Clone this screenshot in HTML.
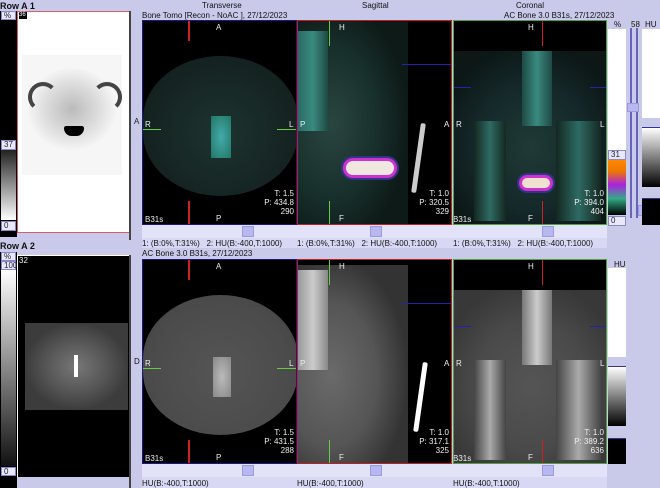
<!DOCTYPE html>
<html><head><meta charset="utf-8"><style>
*{margin:0;padding:0;box-sizing:border-box}
body{width:660px;height:488px;overflow:hidden;background:#c9c9ea;font-family:"Liberation Sans",sans-serif;font-size:8px;color:#222;position:relative}
.a{position:absolute}
.pan{position:absolute;background:#000;overflow:hidden}
.w{color:#eee;font-size:8px;position:absolute}
.lbl{position:absolute;font-size:8px;color:#111;white-space:nowrap}
.bar{position:absolute;background:#e2e2f8}
.th{position:absolute;background:#b8b8f0;border:1px solid #9a9ae0;width:12px;height:11px}
.box{position:absolute;background:#e8e8fa;border:1px solid #8888c8;font-size:8px;color:#223;padding-left:2px;line-height:8px}
</style></head><body>

<div class="lbl" style="left:0;top:1px;font-weight:bold;font-size:9px">Row A 1</div>
<div class="a" style="left:0;top:11px;width:17px;height:226px;background:#000"></div>
<div class="box" style="left:1px;top:11px;width:15px;height:9px">%</div>
<div class="box" style="left:1px;top:140px;width:15px;height:10px">37</div>
<div class="a" style="left:1px;top:150px;width:15px;height:70px;background:linear-gradient(#222,#fff)"></div>
<div class="box" style="left:1px;top:221px;width:15px;height:10px">0</div>
<div class="a" style="left:17px;top:11px;width:113px;height:222px;background:#fff;border:1px solid #d06070"></div>
<div class="a" style="left:19px;top:12px;width:8px;height:7px;background:#000;color:#fff;font-size:6px">36</div>
<div class="a" style="left:22px;top:55px;width:100px;height:120px;background:radial-gradient(ellipse 45% 35% at 50% 45%,#bbb,#ddd 60%,#f6f6f6 100%)"></div>
<div class="a" style="left:28px;top:82px;width:30px;height:30px;border-radius:50%;border:4px solid #444;border-right-color:transparent;border-bottom-color:transparent"></div>
<div class="a" style="left:92px;top:82px;width:30px;height:30px;border-radius:50%;border:4px solid #444;border-left-color:transparent;border-bottom-color:transparent"></div>
<div class="a" style="left:64px;top:126px;width:20px;height:10px;background:#000;border-radius:3px 3px 10px 10px"></div>
<div class="a" style="left:129px;top:11px;width:2px;height:229px;background:#444"></div>

<div class="lbl" style="left:0;top:241px;font-weight:bold;font-size:9px">Row A 2</div>
<div class="a" style="left:0;top:252px;width:17px;height:236px;background:#000"></div>
<div class="box" style="left:1px;top:252px;width:15px;height:9px">%</div>
<div class="box" style="left:1px;top:261px;width:15px;height:9px">100</div>
<div class="a" style="left:1px;top:270px;width:15px;height:196px;background:linear-gradient(#fff,#111)"></div>
<div class="box" style="left:1px;top:467px;width:15px;height:9px">0</div>
<div class="a" style="left:17px;top:255px;width:113px;height:222px;background:#000;border:1px solid #fff;border-bottom:none"></div>
<div class="w" style="left:19px;top:256px">32</div>
<div class="a" style="left:25px;top:323px;width:103px;height:87px;background:radial-gradient(ellipse 50% 50% at 50% 50%,#777,#555 60%,#3c3c3c)"></div>
<div class="a" style="left:74px;top:355px;width:4px;height:22px;background:#fff"></div>
<div class="a" style="left:129px;top:255px;width:2px;height:233px;background:#444"></div>

<div class="lbl" style="left:202px;top:1px">Transverse</div>
<div class="lbl" style="left:362px;top:1px">Sagittal</div>
<div class="lbl" style="left:516px;top:1px">Coronal</div>
<div class="lbl" style="left:142px;top:11px">Bone Tomo [Recon - NoAC ], 27/12/2023</div>
<div class="lbl" style="left:504px;top:11px">AC Bone 3.0 B31s, 27/12/2023</div>

<div class="pan" style="left:142px;top:20px;width:155px;height:205px;border:1px solid #1a1a80">
 <div class="a" style="left:0;top:35px;width:155px;height:140px;border-radius:50%/45%;background:radial-gradient(ellipse at 50% 55%,#1d3330,#142220 70%,#0a1211)"></div>
 <div class="a" style="left:68px;top:95px;width:20px;height:42px;background:radial-gradient(#4aa,#276)"></div>
 <div class="a" style="left:45px;top:0;width:2px;height:20px;background:#c22"></div>
 <div class="a" style="left:45px;top:180px;width:2px;height:25px;background:#c22"></div>
 <div class="a" style="left:0;top:108px;width:18px;height:1px;background:#6c4"></div>
 <div class="a" style="left:134px;top:108px;width:20px;height:1px;background:#6c4"></div>
 <div class="w" style="left:73px;top:2px">A</div><div class="w" style="left:73px;top:193px">P</div>
 <div class="w" style="left:2px;top:99px">R</div><div class="w" style="left:146px;top:99px">L</div>
 <div class="w" style="right:2px;top:168px;text-align:right;line-height:9px">T: 1.5<br>P: 434.8<br>290</div>
 <div class="w" style="left:2px;top:194px">B31s</div>
</div>
<div class="lbl" style="left:134px;top:117px;color:#222">A</div>
<div class="pan" style="left:297px;top:20px;width:155px;height:205px;border:1px solid #c02020">
 <div class="a" style="left:0;top:0;width:110px;height:205px;background:radial-gradient(ellipse 70% 60% at 30% 50%,#2a4540,#18302c 60%,#0d1a18)"></div>
 <div class="a" style="left:0;top:10px;width:30px;height:100px;background:linear-gradient(90deg,#2a6a64,#3a8a80,#1d4a44)"></div>
 <div class="a" style="left:48px;top:140px;width:48px;height:14px;border-radius:8px;background:#f0e8e0;box-shadow:0 0 0 3px #c3c,0 0 0 5px #338"></div>
 <div class="a" style="left:118px;top:102px;width:5px;height:70px;background:#ccc;border-radius:2px;transform:rotate(8deg)"></div>
 <div class="a" style="left:31px;top:0;width:1px;height:25px;background:#6c4"></div>
 <div class="a" style="left:31px;top:180px;width:1px;height:25px;background:#6c4"></div>
 <div class="a" style="left:104px;top:43px;width:50px;height:1px;background:#22a"></div>
 <div class="w" style="left:41px;top:2px">H</div><div class="w" style="left:41px;top:193px">F</div>
 <div class="w" style="left:2px;top:99px">P</div><div class="w" style="left:146px;top:99px">A</div>
 <div class="w" style="right:2px;top:168px;text-align:right;line-height:9px">T: 1.0<br>P: 320.5<br>329</div>
</div>
<div class="pan" style="left:453px;top:20px;width:154px;height:205px;border:1px solid #50a040">
 <div class="a" style="left:0;top:30px;width:154px;height:175px;background:radial-gradient(ellipse 60% 60% at 50% 55%,#1f3a36,#15282a 60%,#0c1716)"></div>
 <div class="a" style="left:68px;top:30px;width:30px;height:75px;background:linear-gradient(90deg,#1d4a44,#3a8a80,#1d4a44)"></div>
 <div class="a" style="left:20px;top:100px;width:32px;height:100px;background:linear-gradient(90deg,#132820,#2e6a64,#132820)"></div>
 <div class="a" style="left:102px;top:100px;width:45px;height:100px;background:linear-gradient(90deg,#132820,#2e6a64,#132820)"></div>
 <div class="a" style="left:68px;top:157px;width:28px;height:10px;border-radius:6px;background:#f0e0d0;box-shadow:0 0 0 3px #c3c,0 0 0 5px #338"></div>
 <div class="a" style="left:88px;top:0;width:1px;height:25px;background:#c22"></div>
 <div class="a" style="left:88px;top:180px;width:1px;height:25px;background:#c22"></div>
 <div class="a" style="left:0;top:66px;width:17px;height:1px;background:#22a"></div>
 <div class="a" style="left:136px;top:66px;width:18px;height:1px;background:#22a"></div>
 <div class="w" style="left:74px;top:2px">H</div><div class="w" style="left:74px;top:193px">F</div>
 <div class="w" style="left:2px;top:99px">R</div><div class="w" style="left:146px;top:99px">L</div>
 <div class="w" style="right:2px;top:168px;text-align:right;line-height:9px">T: 1.0<br>P: 394.0<br>404</div>
 <div class="w" style="left:-1px;top:194px">B31s</div>
</div>
<div class="bar" style="left:142px;top:225px;width:465px;height:13px"></div>
<div class="th" style="left:242px;top:226px"></div>
<div class="th" style="left:370px;top:226px"></div>
<div class="th" style="left:542px;top:226px"></div>
<div class="bar" style="left:142px;top:238px;width:465px;height:10px;background:#d8d8f4"></div>
<div class="lbl" style="left:142px;top:239px">1: (B:0%,T:31%)&nbsp;&nbsp;&nbsp;2: HU(B:-400,T:1000)</div>
<div class="lbl" style="left:297px;top:239px">1: (B:0%,T:31%)&nbsp;&nbsp;&nbsp;2: HU(B:-400,T:1000)</div>
<div class="lbl" style="left:453px;top:239px">1: (B:0%,T:31%)&nbsp;&nbsp;&nbsp;2: HU(B:-400,T:1000)</div>

<div class="lbl" style="left:614px;top:20px">%</div>
<div class="lbl" style="left:631px;top:20px">58</div>
<div class="lbl" style="left:645px;top:20px">HU</div>
<div class="a" style="left:608px;top:29px;width:18px;height:121px;background:#fff"></div>
<div class="box" style="left:608px;top:150px;width:18px;height:10px">31</div>
<div class="a" style="left:608px;top:160px;width:18px;height:55px;background:linear-gradient(#f80,#e70 20%,#a2d 45%,#3a8 70%,#000)"></div>
<div class="box" style="left:608px;top:216px;width:18px;height:10px">0</div>
<div class="a" style="left:630px;top:28px;width:8px;height:190px;border-left:2px solid #6666b8;border-right:2px solid #6666b8"></div>
<div class="th" style="left:627px;top:103px;width:12px;height:9px"></div>
<div class="th" style="left:638px;top:205px;width:10px;height:11px"></div>
<div class="a" style="left:642px;top:29px;width:18px;height:89px;background:#fff"></div>
<div class="a" style="left:642px;top:127px;width:18px;height:60px;background:linear-gradient(#fff,#000);border-top:1px solid #338"></div>
<div class="a" style="left:642px;top:198px;width:18px;height:27px;background:#000;border-top:1px solid #338"></div>

<div class="lbl" style="left:142px;top:249px">AC Bone 3.0 B31s, 27/12/2023</div>
<div class="pan" style="left:142px;top:259px;width:155px;height:205px;border:1px solid #1a1a80">
 <div class="a" style="left:0;top:35px;width:155px;height:140px;border-radius:50%/45%;background:radial-gradient(ellipse at 50% 55%,#555,#4a4a4a 70%,#2a2a2a)"></div>
 <div class="a" style="left:70px;top:97px;width:18px;height:40px;background:radial-gradient(#bbb,#888)"></div>
 <div class="a" style="left:45px;top:0;width:2px;height:20px;background:#c22"></div>
 <div class="a" style="left:45px;top:180px;width:2px;height:25px;background:#c22"></div>
 <div class="a" style="left:0;top:108px;width:18px;height:1px;background:#6c4"></div>
 <div class="a" style="left:134px;top:108px;width:20px;height:1px;background:#6c4"></div>
 <div class="w" style="left:73px;top:2px">A</div><div class="w" style="left:73px;top:193px">P</div>
 <div class="w" style="left:2px;top:99px">R</div><div class="w" style="left:146px;top:99px">L</div>
 <div class="w" style="right:2px;top:168px;text-align:right;line-height:9px">T: 1.5<br>P: 431.5<br>288</div>
 <div class="w" style="left:2px;top:194px">B31s</div>
</div>
<div class="lbl" style="left:134px;top:357px">D</div>
<div class="pan" style="left:297px;top:259px;width:155px;height:205px;border:1px solid #c02020">
 <div class="a" style="left:0;top:5px;width:110px;height:200px;background:radial-gradient(ellipse 70% 60% at 30% 55%,#6a6a6a,#555 60%,#333)"></div>
 <div class="a" style="left:0;top:10px;width:30px;height:100px;background:linear-gradient(90deg,#999,#ccc,#888)"></div>
 <div class="a" style="left:120px;top:102px;width:5px;height:70px;background:#fff;border-radius:2px;transform:rotate(8deg)"></div>
 <div class="a" style="left:31px;top:0;width:1px;height:25px;background:#6c4"></div>
 <div class="a" style="left:31px;top:180px;width:1px;height:25px;background:#6c4"></div>
 <div class="a" style="left:104px;top:43px;width:50px;height:1px;background:#22a"></div>
 <div class="w" style="left:41px;top:2px">H</div><div class="w" style="left:41px;top:193px">F</div>
 <div class="w" style="left:2px;top:99px">P</div><div class="w" style="left:146px;top:99px">A</div>
 <div class="w" style="right:2px;top:168px;text-align:right;line-height:9px">T: 1.0<br>P: 317.1<br>325</div>
</div>
<div class="pan" style="left:453px;top:259px;width:154px;height:205px;border:1px solid #50a040">
 <div class="a" style="left:0;top:30px;width:154px;height:175px;background:radial-gradient(ellipse 60% 60% at 50% 55%,#555,#4a4a4a 60%,#383838)"></div>
 <div class="a" style="left:68px;top:30px;width:30px;height:75px;background:linear-gradient(90deg,#777,#ccc,#777)"></div>
 <div class="a" style="left:20px;top:100px;width:32px;height:100px;background:linear-gradient(90deg,#444,#aaa,#444)"></div>
 <div class="a" style="left:102px;top:100px;width:45px;height:100px;background:linear-gradient(90deg,#444,#aaa,#444)"></div>
 <div class="a" style="left:88px;top:0;width:1px;height:25px;background:#c22"></div>
 <div class="a" style="left:88px;top:180px;width:1px;height:25px;background:#c22"></div>
 <div class="a" style="left:0;top:66px;width:17px;height:1px;background:#22a"></div>
 <div class="a" style="left:136px;top:66px;width:18px;height:1px;background:#22a"></div>
 <div class="w" style="left:74px;top:2px">H</div><div class="w" style="left:74px;top:193px">F</div>
 <div class="w" style="left:2px;top:99px">R</div><div class="w" style="left:146px;top:99px">L</div>
 <div class="w" style="right:2px;top:168px;text-align:right;line-height:9px">T: 1.0<br>P: 389.2<br>636</div>
 <div class="w" style="left:-1px;top:194px">B31s</div>
</div>
<div class="bar" style="left:142px;top:464px;width:465px;height:13px"></div>
<div class="th" style="left:242px;top:465px"></div>
<div class="th" style="left:370px;top:465px"></div>
<div class="th" style="left:542px;top:465px"></div>
<div class="bar" style="left:142px;top:477px;width:465px;height:11px;background:#d8d8f4"></div>
<div class="lbl" style="left:142px;top:479px">HU(B:-400,T:1000)</div>
<div class="lbl" style="left:297px;top:479px">HU(B:-400,T:1000)</div>
<div class="lbl" style="left:453px;top:479px">HU(B:-400,T:1000)</div>

<div class="lbl" style="left:614px;top:260px">HU</div>
<div class="a" style="left:608px;top:268px;width:18px;height:89px;background:#fff"></div>
<div class="a" style="left:608px;top:366px;width:18px;height:60px;background:linear-gradient(#fff,#000);border-top:1px solid #338"></div>
<div class="a" style="left:608px;top:438px;width:18px;height:26px;background:#000;border-top:1px solid #338"></div>
</body></html>
